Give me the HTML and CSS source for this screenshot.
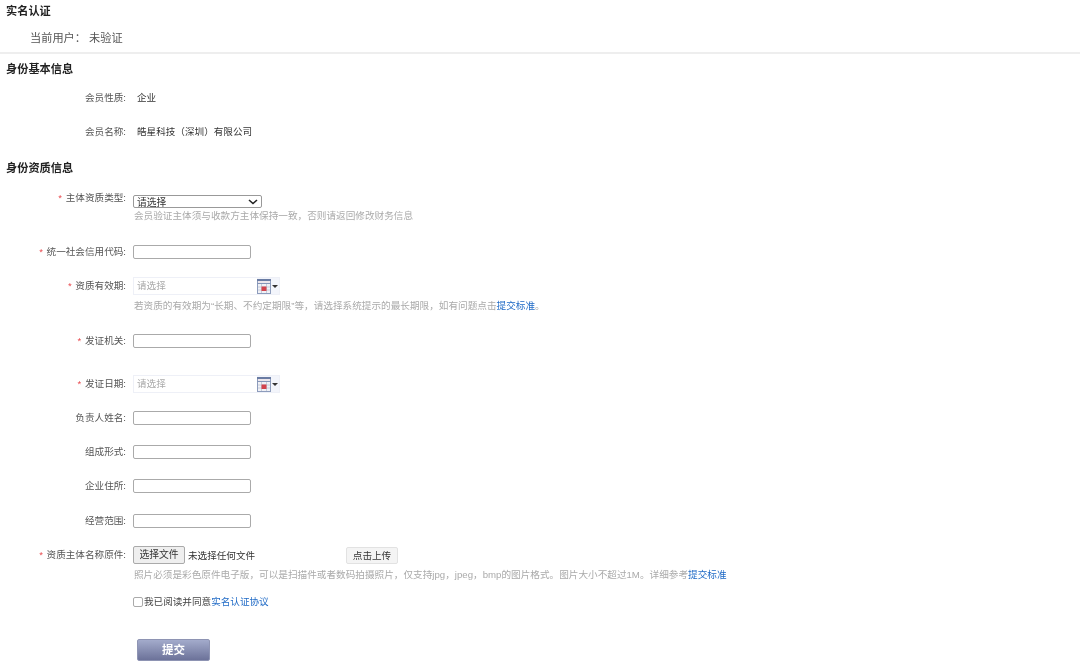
FILE: index.html
```
<!DOCTYPE html>
<html lang="zh-CN">
<head>
<meta charset="utf-8">
<title>实名认证</title>
<link rel="stylesheet" href="styles.css">
</head>
<body>
<svg class="sprite" width="0" height="0" aria-hidden="true">
  <symbol id="cal" viewBox="0 0 14 15">
    <rect width="14" height="15" fill="#8d9cbc"/>
    <rect y="0" width="14" height="2" fill="#6a7ca3"/>
    <rect x="1" y="2" width="12" height="2" fill="#ece6ec"/>
    <rect x="0" y="4" width="14" height="1" fill="#8496b8"/>
    <rect x="1" y="5" width="12" height="9" fill="#f0f1f6"/>
    <path d="M1 8h12M1 11h12M4.5 5v9M9.5 5v9" stroke="#c6ccda" stroke-width="1" fill="none"/>
    <rect x="4.5" y="7.5" width="5" height="4.5" fill="#d2424c"/>
  </symbol>
</svg>
<header class="top">
  <h1 class="page-title">实名认证</h1>
  <p class="user-line"><span>当前用户：</span><span>未验证</span></p>
</header>
<section class="basic">
  <h2 class="section-title">身份基本信息</h2>
  <div class="row member first"><div class="label">会员性质:</div><div class="value">企业</div></div>
  <div class="row member"><div class="label">会员名称:</div><div class="value">皓星科技（深圳）有限公司</div></div>
</section>
<section class="quals">
  <h2 class="section-title">身份资质信息</h2>
  <div class="row type">
    <div class="label"><i>*</i> 主体资质类型:</div>
    <div class="control select-cell">
      <select class="select"><option>请选择</option></select>
      <p class="hint">会员验证主体须与收款方主体保持一致，否则请返回修改财务信息</p>
    </div>
  </div>
  <div class="row m22">
    <div class="label"><i>*</i> 统一社会信用代码:</div>
    <div class="control"><input class="input" type="text"></div>
  </div>
  <div class="row m18">
    <div class="label tall"><i>*</i> 资质有效期:</div>
    <div class="control">
      <div class="date"><span class="date-text">请选择</span><svg class="cal" width="14" height="15"><use href="#cal"/></svg><span class="caret"></span></div>
      <p class="hint hint-gap">若资质的有效期为“长期、不约定期限”等，请选择系统提示的最长期限，如有问题点击<a href="#">提交标准</a>。</p>
    </div>
  </div>
  <div class="row m21">
    <div class="label"><i>*</i> 发证机关:</div>
    <div class="control"><input class="input" type="text"></div>
  </div>
  <div class="row m27">
    <div class="label tall"><i>*</i> 发证日期:</div>
    <div class="control">
      <div class="date"><span class="date-text">请选择</span><svg class="cal" width="14" height="15"><use href="#cal"/></svg><span class="caret"></span></div>
    </div>
  </div>
  <div class="row m18">
    <div class="label">负责人姓名:</div>
    <div class="control"><input class="input" type="text"></div>
  </div>
  <div class="row m20">
    <div class="label">组成形式:</div>
    <div class="control"><input class="input" type="text"></div>
  </div>
  <div class="row m20">
    <div class="label">企业住所:</div>
    <div class="control"><input class="input" type="text"></div>
  </div>
  <div class="row m21">
    <div class="label">经营范围:</div>
    <div class="control"><input class="input" type="text"></div>
  </div>
  <div class="row m18">
    <div class="label tall"><i>*</i> 资质主体名称原件:</div>
    <div class="control">
      <div class="file">
        <button class="file-btn" type="button">选择文件</button>
        <span class="file-name">未选择任何文件</span>
        <button class="upload-btn" type="button">点击上传</button>
      </div>
      <p class="hint hint-gap">照片必须是彩色原件电子版，可以是扫描件或者数码拍摄照片，仅支持jpg，jpeg，bmp的图片格式。图片大小不超过1M。详细参考<a href="#">提交标准</a></p>
    </div>
  </div>
  <div class="row m15">
    <div class="label"></div>
    <label class="control agree"><input class="check" type="checkbox"><span>我已阅读并同意<a href="#">实名认证协议</a></span></label>
  </div>
  <div class="actions"><button class="submit" type="button">提交</button></div>
</section>
</body>
</html>
```
FILE: styles.css
```
* { box-sizing: border-box; }
html, body { margin: 0; padding: 0; background: #fff; }
body {
  font-family: "Liberation Sans", "Noto Sans CJK SC", sans-serif;
  font-size: 9.6px;
  line-height: 14px;
  color: #444;
  filter: blur(0.45px);
}
.sprite { position: absolute; }
.top { height: 54px; padding-top: 4px; border-bottom: 2px solid #eee; }
.page-title, .section-title {
  margin: 0;
  padding-left: 6px;
  font-size: 11.2px;
  line-height: 14px;
  font-weight: 700;
  color: #222;
}
.user-line {
  margin: 13px 0 0;
  padding-left: 30px;
  display: flex;
  font-size: 11.2px;
  line-height: 14px;
  color: #555;
  white-space: nowrap;
}
.user-line span:first-child { width: 59px; }
.basic { padding-top: 8px; }
.quals { padding-top: 22px; }
.row {
  display: grid;
  grid-template-columns: 126px 1fr;
  column-gap: 7px;
  align-items: start;
}
.member { margin-top: 20px; }
.member.first { margin-top: 15px; }
.type { margin-top: 16px; }
.m15 { margin-top: 15px; }
.m18 { margin-top: 18px; }
.m20 { margin-top: 20px; }
.m21 { margin-top: 21px; }
.m22 { margin-top: 22px; }
.m27 { margin-top: 27px; }
.label {
  height: 14px;
  line-height: 14px;
  text-align: right;
  white-space: nowrap;
  color: #555;
}
.label.tall { padding-top: 2px; height: 16px; }
.label i { font-style: normal; color: #e8474c; margin-right: 1px; }
.value { padding-left: 4px; line-height: 14px; color: #333; }
.control { min-width: 0; }
.select-cell { padding-top: 4px; }
.select {
  appearance: none;
  display: block;
  width: 129px;
  height: 13px;
  padding: 1px 0 0 3px;
  font: inherit;
  font-size: 9.8px;
  line-height: 11px;
  color: #333;
  background: #fff url("data:image/svg+xml,%3Csvg xmlns='http://www.w3.org/2000/svg' width='10' height='6'%3E%3Cpath d='M1 1l4 3.5L9 1' fill='none' stroke='%23222' stroke-width='1.6'/%3E%3C/svg%3E") no-repeat right 3px center;
  border: 1px solid #999;
  border-radius: 2px;
}
.hint { margin: 0; padding: 1px 0 0 1px; font-size: 9.65px; line-height: 14px; color: #aaa; white-space: nowrap; }
.hint-gap { margin-top: 3px; }
.hint a, .agree a { color: #1f6ac6; text-decoration: none; }
.input {
  display: block;
  width: 118px;
  height: 14px;
  padding: 0 2px;
  background: #fff;
  border: 1px solid #aaa;
  border-radius: 2px;
}
.date {
  display: flex;
  align-items: center;
  width: 147px;
  height: 18px;
  background: #f3f5fb;
  border: 1px solid #eef0f7;
}
.date-text {
  align-self: stretch;
  flex: 0 0 123px;
  padding-left: 3px;
  line-height: 15px;
  background: #fff;
  color: #aaa;
}
.cal { flex: none; display: block; }
.caret {
  margin-left: 1px;
  width: 0;
  height: 0;
  border-left: 3px solid transparent;
  border-right: 3px solid transparent;
  border-top: 3px solid #333;
}
.file { display: flex; align-items: center; height: 18px; }
.file-btn {
  width: 52px;
  height: 18px;
  padding: 0;
  font: inherit;
  font-size: 9.8px;
  line-height: 16px;
  color: #333;
  background: #efefef;
  border: 1px solid #aaa;
  border-radius: 2px;
}
.file-name { width: 158px; margin-left: 3px; padding-top: 1px; color: #333; }
.upload-btn {
  width: 52px;
  height: 17px;
  padding: 0;
  font: inherit;
  font-size: 9.6px;
  line-height: 15px;
  color: #333;
  background: #f4f4f4;
  border: 1px solid #e2e2e2;
  border-radius: 2px;
}
.agree { display: flex; align-items: center; height: 10px; color: #444; white-space: nowrap; }
.agree span { margin-left: 1px; }
.check {
  appearance: none;
  width: 10px;
  height: 10px;
  margin: 0;
  flex: none;
  background: #fff;
  border: 1px solid #aaa;
  border-radius: 2px;
}
.actions { margin-top: 28px; padding-left: 137px; }
.submit {
  display: block;
  width: 73px;
  height: 22px;
  padding: 0;
  font: inherit;
  font-size: 11.5px;
  font-weight: 700;
  line-height: 20px;
  color: #fff;
  background: linear-gradient(#a3abcb, #6c7299);
  border: 1px solid #8e94b3;
  border-radius: 2px;
}
```
